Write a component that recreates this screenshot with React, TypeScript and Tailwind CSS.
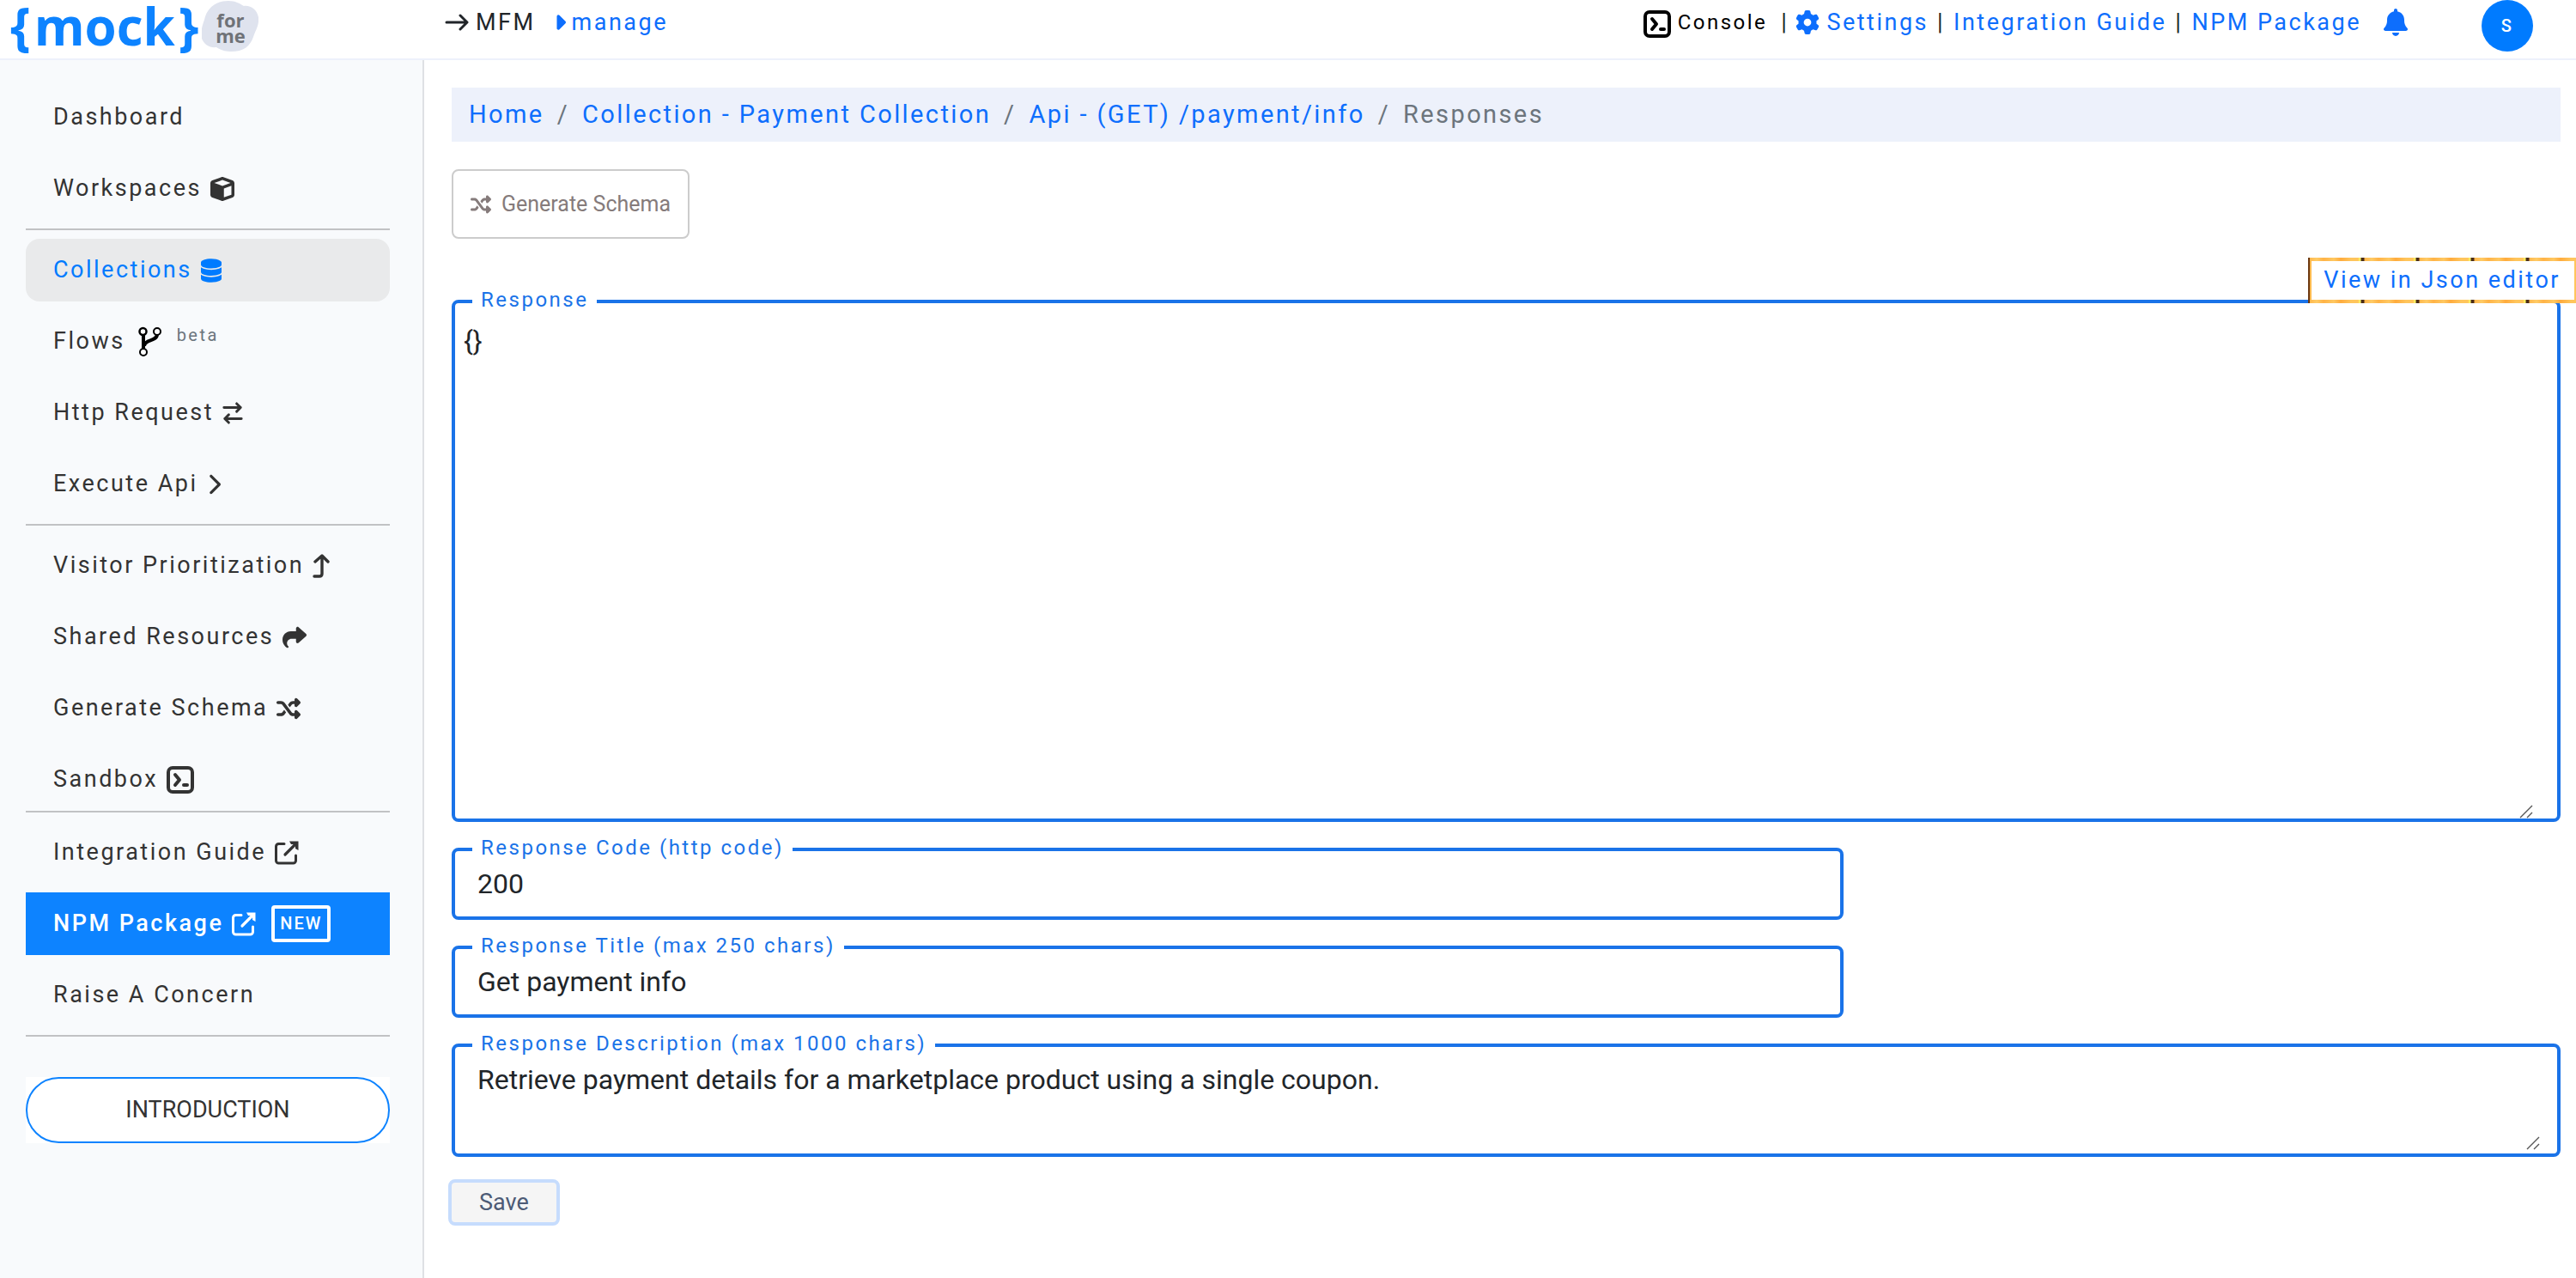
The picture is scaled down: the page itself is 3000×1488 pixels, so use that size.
import React from "react";
import {
  FaBell,
  FaCaretRight,
  FaChevronRight,
  FaCube,
  FaDatabase,
  FaGear,
  FaShare,
  FaShuffle,
} from "react-icons/fa6";

type IconProps = { className?: string };

const TerminalIcon = ({ className }: IconProps) => (
  <svg viewBox="0 0 32 32" fill="none" stroke="currentColor" className={className} aria-hidden="true">
    <rect x="2" y="2" width="28" height="28" rx="5" strokeWidth="4" />
    <path d="M10 10l5 6-5 6" strokeWidth="4" strokeLinecap="round" strokeLinejoin="round" />
    <path d="M20 22h4" strokeWidth="4" strokeLinecap="round" />
  </svg>
);

const ExternalIcon = ({ className }: IconProps) => (
  <svg viewBox="0 0 28 28" fill="none" stroke="currentColor" className={className} aria-hidden="true">
    <path d="M11 3.5H4.5a3 3 0 0 0-3 3V23a3 3 0 0 0 3 3H21.5a3 3 0 0 0 3-3v-6" strokeWidth="3" strokeLinecap="round" />
    <path d="M12 16L25 3" strokeWidth="3.2" strokeLinecap="round" />
    <path d="M17 .5h10.5v10.5L24 9V4h-5z" fill="currentColor" stroke="none" />
  </svg>
);

const ArrowUpIcon = ({ className }: IconProps) => (
  <svg viewBox="0 0 20 28" fill="none" stroke="currentColor" strokeWidth="3.4" strokeLinecap="round" strokeLinejoin="round" className={className} aria-hidden="true">
    <path d="M3 9l8-7 7 7M11 3v20q0 3-3 3H2" />
  </svg>
);

const SwapIcon = ({ className }: IconProps) => (
  <svg viewBox="0 0 26 28" fill="none" stroke="currentColor" strokeWidth="3.2" strokeLinecap="round" strokeLinejoin="round" className={className} aria-hidden="true">
    <path d="M2 7h21M18 2l5 5-5 5M24 21H3M8 16l-5 5 5 5" />
  </svg>
);

const BranchIcon = ({ className }: IconProps) => (
  <svg viewBox="0 0 28 36" fill="none" stroke="currentColor" className={className} aria-hidden="true">
    <path d="M7 9v18M23 9c0 9-15 6-15 14" strokeWidth="4" />
    <circle cx="6.5" cy="6" r="4" fill="#fff" strokeWidth="2.5" />
    <circle cx="23" cy="6" r="4" fill="#fff" strokeWidth="2" />
    <circle cx="7" cy="30" r="4" fill="#fff" strokeWidth="2" />
  </svg>
);

const Grip = ({ className }: IconProps) => (
  <svg viewBox="0 0 16 16" stroke="#555" strokeWidth="1.4" className={className} aria-hidden="true">
    <path d="M1 15L15 1M9 15l6-6" />
  </svg>
);

const Divider = () => <hr className="h-0.5 border-0 bg-[#c1c2c4]" />;

type NavItemProps = {
  label: string;
  icon?: React.ReactNode;
  className?: string;
  children?: React.ReactNode;
};

const NavItem = ({ label, icon, className = "text-[#333]", children }: NavItemProps) => (
  <a href="#" className={`flex h-[73px] items-center gap-2.5 pl-8 text-[27px] ${className}`}>
    <span>{label}</span>
    {icon}
    {children}
  </a>
);

const Sidebar = () => (
  <aside className="w-[494px] shrink-0 border-r-2 border-[#dfe1e4] bg-[#f8fafc] pt-[30px] pr-[38px] pl-[30px]">
    <nav className="flex flex-col gap-2.5">
      <NavItem label="Dashboard" />
      <NavItem label="Workspaces" icon={<FaCube className="size-7" />} />
      <Divider />
      <NavItem
        label="Collections"
        icon={<FaDatabase className="h-7 w-6" />}
        className="rounded-2xl bg-[#e9eaeb] text-[#007bff]"
      />
      <NavItem label="Flows" icon={<BranchIcon className="ml-1 h-9 w-7 text-black" />}>
        <sup className="-top-2 ml-2 text-xl text-[#6c757d]">beta</sup>
      </NavItem>
      <NavItem label="Http Request" icon={<SwapIcon className="h-7 w-6" />} />
      <NavItem label="Execute Api" icon={<FaChevronRight className="h-7 w-4" />} />
      <Divider />
      <NavItem label="Visitor Prioritization" icon={<ArrowUpIcon className="h-7 w-5" />} />
      <NavItem label="Shared Resources" icon={<FaShare className="size-7" />} />
      <NavItem label="Generate Schema" icon={<FaShuffle className="size-7" />} />
      <div>
        <NavItem label="Sandbox" icon={<TerminalIcon className="size-8" />} />
        <Divider />
      </div>
      <NavItem label="Integration Guide" icon={<ExternalIcon className="size-7" />} />
      <NavItem label="NPM Package" icon={<ExternalIcon className="size-7" />} className="bg-[#0d83ff] font-medium text-white">
        <span className="ml-2 rounded border-4 border-white px-1.5 text-xl leading-[35px] tracking-widest">NEW</span>
      </NavItem>
      <NavItem label="Raise A Concern" />
      <Divider />
    </nav>
    <div className="mt-[47px] bg-white">
      <button type="button" className="h-[77px] w-full rounded-full border-2 border-[#0d83ff] text-[27px] tracking-normal text-[#333]">
        INTRODUCTION
      </button>
    </div>
  </aside>
);

const Logo = () => (
  <a href="#" className="flex h-[60px] w-[494px] shrink-0 items-center self-start pl-3 font-['Open_Sans',sans-serif] font-bold tracking-normal">
    <span className="flex gap-1 text-[60px] leading-[60px] text-[#0d83ff]">
      <span>{"{"}</span>
      <span>mock</span>
      <span>{"}"}</span>
    </span>
    <span className="relative ml-1 flex h-[60px] w-[66px] flex-col items-center justify-center pt-1 text-[22px] leading-[18px] text-[#6f7277]">
      <svg viewBox="0 0 66 60" className="absolute inset-0 size-full" aria-hidden="true">
        <path d="M31 1c8 0 13 3 18 6 8-1 15 4 17 13 1 10-4 16-6 23-4 11-11 17-26 17-6 0-11-1-17-5-8 1-14-3-17-10-2-9 1-16 3-22C6 9 16 1 31 1z" fill="#dfe3ee" />
      </svg>
      <span className="relative">for</span>
      <span className="relative">me</span>
    </span>
  </a>
);

const Header = () => (
  <header className="flex h-[70px] items-center border-b-2 border-[#edf1fb] bg-white text-[27px]">
    <Logo />
    <div className="flex h-[52px] flex-1 items-center self-start pl-6">
      <svg viewBox="0 0 28 20" fill="none" stroke="#212529" strokeWidth="3" strokeLinecap="round" strokeLinejoin="round" className="mr-2 h-5 w-7" aria-hidden="true">
        <path d="M2 10h23M18 2l8 8-8 8" />
      </svg>
      <span className="text-[#212529]">MFM</span>
      <a href="#" className="ml-3.5 flex items-center text-[#0d6efd]">
        <FaCaretRight className="size-7" />
        manage
      </a>
    </div>
    <div className="flex h-[52px] items-center self-start pr-[50px] text-[#0d6efd]">
      <button type="button" className="flex items-center gap-2 text-2xl text-black">
        <TerminalIcon className="mt-1 size-8" />
        Console
      </button>
      <span className="mr-2 ml-4 text-[#212529]">|</span>
      <a href="#" className="flex items-center gap-2"><FaGear className="size-7" />Settings</a>
      <span className="mx-2.5 text-[#212529]">|</span>
      <a href="#">Integration Guide</a>
      <span className="mx-2.5 text-[#212529]">|</span>
      <a href="#">NPM Package</a>
      <button type="button" aria-label="Notifications" className="ml-[26px]"><FaBell className="h-8 w-7" /></button>
      <button type="button" className="ml-[86px] size-[60px] self-start rounded-full bg-[#007bff] text-xl font-medium text-white">S</button>
    </div>
  </header>
);

const Breadcrumb = () => (
  <nav aria-label="Breadcrumb" className="bg-[#edf1fb] text-2xl tracking-widest">
    <ol className="flex h-[63px] items-center gap-[15px] px-5 text-[29px] text-[#6c757d]">
      <li><a href="#" className="text-[#0d6efd]">Home</a></li>
      <li aria-hidden="true">/</li>
      <li><a href="#" className="text-[#0d6efd]">Collection - Payment Collection</a></li>
      <li aria-hidden="true">/</li>
      <li><a href="#" className="text-[#0d6efd]">Api - (GET) /payment/info</a></li>
      <li aria-hidden="true">/</li>
      <li>Responses</li>
    </ol>
  </nav>
);

type FieldProps = {
  id: string;
  label: string;
  className?: string;
  children: React.ReactNode;
};

const Field = ({ id, label, className = "", children }: FieldProps) => (
  <fieldset className={`relative rounded-lg border-4 border-[#1a73e8] ${className}`}>
    <legend className="ml-5 px-2.5 pb-1 text-2xl leading-6 text-[#1a73e8]">
      <label htmlFor={id}>{label}</label>
    </legend>
    {children}
  </fieldset>
);

const App = () => {
  return (
    <div className="flex min-h-screen flex-col bg-white font-[Roboto,sans-serif] text-[25px] tracking-widest">
      <Header />
      <div className="flex flex-1">
        <Sidebar />
        <main className="min-w-0 flex-1 pt-8 pr-[18px] pl-8">
          <Breadcrumb />
          <button type="button" className="mt-8 flex h-[81px] items-center gap-3 rounded-lg border-2 border-[#ccc] px-5 text-[25px] tracking-normal text-[#857b7b]">
            <FaShuffle className="size-6" />
            Generate Schema
          </button>

          <form className="mt-[59px] flex flex-col items-start gap-[18px]">
            <div className="relative w-full">
              <Field id="response" label="Response">
                <textarea
                  id="response"
                  defaultValue="{}"
                  className="block h-[588px] w-full resize-none px-2.5 pt-2 text-[32px] leading-[48px] tracking-normal text-[#212529] outline-none"
                />
                <Grip className="absolute right-7 bottom-0 size-4" />
              </Field>
              {/* sits on the top right corner of the response box */}
              <a
                href="#"
                className="absolute -top-[37px] -right-[18px] border-l-2 border-[#6b3710] bg-[#ffc04d] bg-[repeating-linear-gradient(90deg,#ffb84d_0px,#ffcb66_8px,#ffb347_16px,#ffc861_28px,#ffab3d_36px,#ffc55c_48px,#ffc55c_56px,#ffff66_59px,#4a2c18_60px,#4a2c18_63px,#ffb84d_64px)] py-1 pr-0.5 pl-0.5"
              >
                <span className="block bg-white pr-4 pl-3.5 text-[27px] leading-[45px] text-[#0d6efd]">
                  View in Json editor
                </span>
              </a>
            </div>
            <Field id="code" label="Response Code (http code)" className="w-[66%]">
              <input
                id="code"
                type="text"
                defaultValue="200"
                className="block h-16 w-full px-[26px] pb-3 text-[32px] tracking-normal text-[#212529] outline-none"
              />
            </Field>
            <Field id="title" label="Response Title (max 250 chars)" className="w-[66%]">
              <input
                id="title"
                type="text"
                defaultValue="Get payment info"
                className="block h-16 w-full px-[26px] pb-3 text-[32px] tracking-normal text-[#212529] outline-none"
              />
            </Field>
            <Field id="description" label="Response Description (max 1000 chars)" className="w-full">
              <textarea
                id="description"
                defaultValue="Retrieve payment details for a marketplace product using a single coupon."
                className="block h-28 w-full resize-none px-[26px] pt-0.5 text-[32px] leading-[48px] tracking-normal text-[#212529] outline-none"
              />
              <Grip className="absolute right-5 bottom-1 size-4" />
            </Field>
            <button type="submit" className="mt-2 -ml-1 h-[54px] rounded-lg border-4 border-[#c6dcfd] bg-[#f5f5f5] px-8 text-[27px] leading-none tracking-normal text-[#4d5b76]">
              Save
            </button>
          </form>
        </main>
      </div>
    </div>
  );
};

export default App;
